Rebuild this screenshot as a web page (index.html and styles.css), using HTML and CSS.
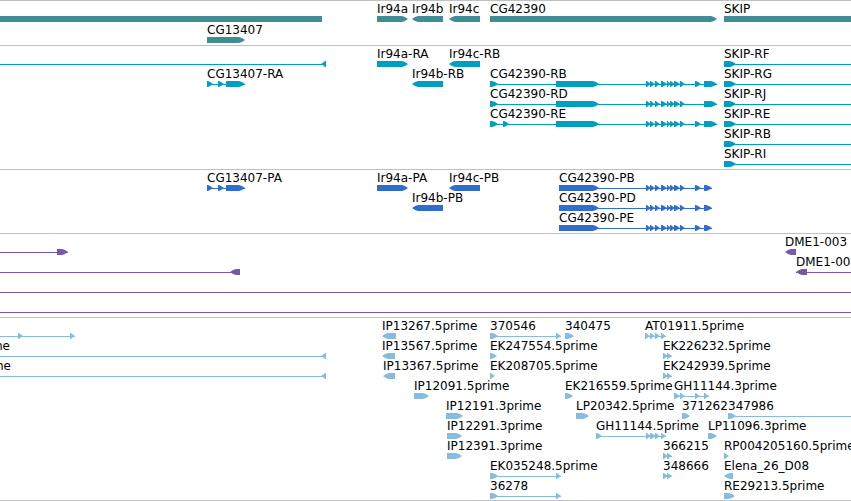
FILE: index.html
```
<!DOCTYPE html>
<html lang="en">
<head>
  <meta charset="UTF-8" />
  <meta name="viewport" content="width=device-width, initial-scale=1.0"/>
  <title>Genome Browser</title>
  <link rel="stylesheet" href="styles.css">
</head>
<body>
  <main class="browser" id="browser"></main>

  <script src="tracks.js"></script>
  <script src="draw.js"></script>
</body>
</html>
```
FILE: styles.css
```
:root {
  --gene: #408e94;
  --transcript: #009fc0;
  --cds: #316dcc;
  --element: #7558a8;
  --est: #87bcdf;
  --rule: #c0c0c0;
  --font: 'DejaVu Sans', sans-serif;
}

* {
  box-sizing: border-box;
}

body {
  margin: 0;
  background: white;
  font-family: var(--font);
}

.browser {
  border-bottom: 1px solid var(--rule);
}

.track {
  border-top: 1px solid var(--rule);
}

.track svg {
  display: block;
  width: 100%;
  overflow: hidden;
}

.gene {
  color: var(--gene);
}

.transcript {
  color: var(--transcript);
}

.cds {
  color: var(--cds);
}

.element {
  color: var(--element);
}

.est {
  color: var(--est);
}

.exon,
.intron {
  fill: currentColor;
}

.intron {
  shape-rendering: crispEdges;
}

.label {
  fill: black;
  font-size: 12px;
}

.label-end {
  text-anchor: end;
}
```
FILE: tracks.js
```
// feature: [label, strand, exons, line start, line end, label end]
// strand is '+', '-' or '' for a plain block
const EDGE = 4000;

const smallExons = [[646, 651], [650, 655], [655, 660], [661, 667], [667, 671], [670, 675], [674, 680], [680, 685]];
const cg13407 = [[207, 213], [218, 224], [226, 245]];
const estPair = [[663, 668], [667, 672]];
const estEnds = [[490, 498], [556, 561]];
const skip = [[724, 736]];

const tracks = [
  {
    name: 'gene', height: 44, pitch: 21,
    rows: [
      [
        ['', '', [[0, 322]]],
        ['Ir94a', '+', [[377, 408]]],
        ['Ir94b', '-', [[412, 443]]],
        ['Ir94c', '-', [[449, 480]]],
        ['CG42390', '+', [[490, 717]]],
        ['SKIP', '', [[724, EDGE]]]
      ],
      [['CG13407', '+', [[207, 245]]]]
    ]
  },
  {
    name: 'transcript', height: 123, pitch: 20,
    rows: [
      [
        ['', '-', [[321, 326]], 0, 326],
        ['Ir94a-RA', '+', [[377, 408]]],
        ['Ir94c-RB', '-', [[449, 480]]],
        ['SKIP-RF', '+', skip, 724, EDGE]
      ],
      [
        ['CG13407-RA', '+', cg13407],
        ['Ir94b-RB', '-', [[412, 443]]],
        ['CG42390-RB', '+', [[490, 498], [556, 599], ...smallExons, [695, 701], [704, 717]]],
        ['SKIP-RG', '+', skip, 724, EDGE]
      ],
      [
        ['CG42390-RD', '+', [[490, 498], [556, 599], ...smallExons, [704, 717]]],
        ['SKIP-RJ', '+', skip, 724, EDGE]
      ],
      [
        ['CG42390-RE', '+', [[490, 498], [503, 509], [556, 599], ...smallExons, [695, 701], [704, 717]]],
        ['SKIP-RE', '+', skip, 724, EDGE]
      ],
      [['SKIP-RB', '+', skip, 724, EDGE]],
      [['SKIP-RI', '+', skip, 724, EDGE]]
    ]
  },
  {
    name: 'cds', height: 63, pitch: 20,
    rows: [
      [
        ['CG13407-PA', '+', cg13407],
        ['Ir94a-PA', '+', [[377, 408]]],
        ['Ir94c-PB', '-', [[449, 480]]],
        ['CG42390-PB', '+', [[559, 599], ...smallExons, [695, 701], [704, 712]]]
      ],
      [
        ['Ir94b-PB', '-', [[412, 443]]],
        ['CG42390-PD', '+', [[559, 599], ...smallExons, [695, 701], [704, 712]]]
      ],
      [['CG42390-PE', '+', [[559, 599], ...smallExons, [695, 701], [704, 712]]]]
    ]
  },
  {
    name: 'element', height: 83, pitch: 20,
    rows: [
      [
        ['', '+', [[57, 68]], 0, 68],
        ['DME1-003', '-', [[785, 796]]]
      ],
      [
        ['', '-', [[230, 240]], 0, 240],
        ['DME1-004', '-', [[796, 807]], 796, EDGE]
      ],
      [['', '', [], 0, EDGE]],
      [['', '', [], 0, EDGE]]
    ]
  },
  {
    name: 'est', height: 182, pitch: 20,
    rows: [
      [
        ['', '+', [[18, 23], [70, 75]], 0, 75],
        ['IP13267.5prime', '-', [[382, 396]]],
        ['370546', '+', estEnds],
        ['340475', '+', [[565, 574]]],
        ['AT01911.5prime', '+', [[645, 650], [650, 655], [655, 660], [661, 666]]]
      ],
      [
        ['prime', '-', [[321, 326]], 0, 326, 10],
        ['IP13567.5prime', '-', [[382, 395]]],
        ['EK247554.5prime', '+', [[490, 497]]],
        ['EK226232.5prime', '+', estPair]
      ],
      [
        ['prime', '-', [[321, 326]], 0, 326, 11],
        ['IP13367.5prime', '-', [[383, 395]]],
        ['EK208705.5prime', '+', [[490, 495]]],
        ['EK242939.5prime', '+', estPair]
      ],
      [
        ['IP12091.5prime', '+', [[414, 429]]],
        ['EK216559.5prime', '+', [[565, 573]]],
        ['GH11144.3prime', '+', [[674, 680], [680, 685], [695, 700], [704, 709]]]
      ],
      [
        ['IP12191.3prime', '+', [[446, 463]]],
        ['LP20342.5prime', '+', [[576, 589]]],
        ['371262', '+', [[682, 690]]],
        ['347986', '+', [[728, 736]], 728, EDGE]
      ],
      [
        ['IP12291.3prime', '+', [[447, 462]]],
        ['GH11144.5prime', '+', [[596, 602], [646, 651], [650, 656], [655, 660], [661, 666]]],
        ['LP11096.3prime', '+', [[708, 717]]]
      ],
      [
        ['IP12391.3prime', '+', [[447, 462]]],
        ['366215', '+', estPair],
        ['RP004205160.5prime', '+', [[724, 729]]]
      ],
      [
        ['EK035248.5prime', '+', estEnds],
        ['348666', '+', estPair],
        ['Elena_26_D08', '-', [[724, 733]]]
      ],
      [
        ['36278', '+', estEnds],
        ['RE29213.5prime', '+', [[724, 735]]]
      ]
    ]
  }
];
```
FILE: draw.js
```
const BAR_TOP = 15;
const BAR_HEIGHT = 6;
const LABEL_GAP = 3;

// block with a pointed end on the side the strand runs to
function exonPath(start, end, strand, top) {
  const mid = top + BAR_HEIGHT / 2;
  const bottom = top + BAR_HEIGHT;
  const tip = Math.min(6, end - start - 1);
  if (strand === '+') {
    return `M${start} ${top}H${end - tip}L${end - 3} ${top + 1}L${end} ${mid}L${end - 3} ${bottom - 1}L${end - tip} ${bottom}H${start}Z`;
  }
  if (strand === '-') {
    return `M${end} ${top}H${start + tip}L${start + 3} ${top + 1}L${start} ${mid}L${start + 3} ${bottom - 1}L${start + tip} ${bottom}H${end}Z`;
  }
  return `M${start} ${top}H${end}V${bottom}H${start}Z`;
}

function drawFeature(feature, top) {
  const [label, strand, exons, from, to, labelEnd] = feature;
  let out = '';

  const lineStart = from !== undefined ? from : exons[0][0];
  const lineEnd = to !== undefined ? to : exons[exons.length - 1][1];
  if (from !== undefined || exons.length > 1) {
    out += `<rect class="intron" x="${lineStart}" y="${top + 3}" width="${lineEnd - lineStart}" height="1"/>`;
  }

  exons.forEach(([start, end]) => {
    out += `<path class="exon" d="${exonPath(start, end, strand, top)}"/>`;
  });

  if (labelEnd !== undefined) {
    out += `<text class="label label-end" x="${labelEnd}" y="${top - LABEL_GAP}">${label}</text>`;
  } else if (label) {
    out += `<text class="label" x="${exons[0][0]}" y="${top - LABEL_GAP}">${label}</text>`;
  }
  return out;
}

function drawTrack(track) {
  const shapes = track.rows.map((row, i) =>
    row.map(feature => drawFeature(feature, BAR_TOP + i * track.pitch)).join('')
  ).join('');
  return `<section class="track ${track.name}"><svg height="${track.height}">${shapes}</svg></section>`;
}

document.getElementById('browser').innerHTML = tracks.map(drawTrack).join('');
```
